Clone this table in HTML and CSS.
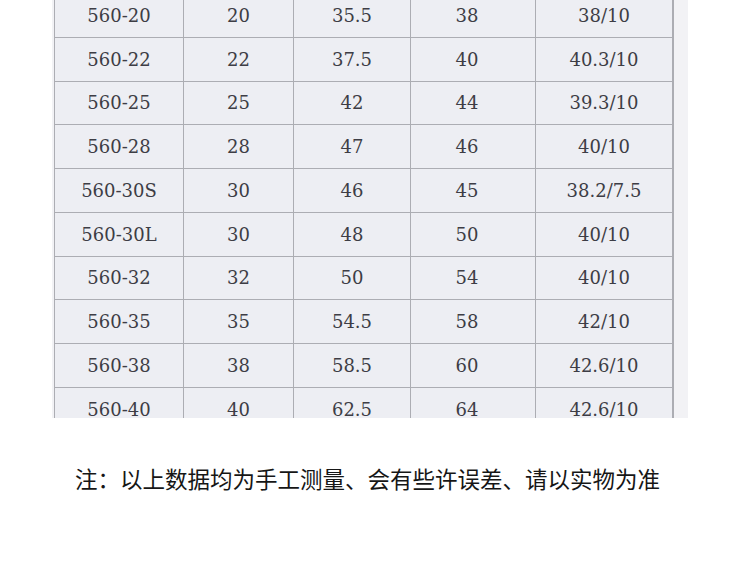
FILE: index.html
```html
<!DOCTYPE html>
<html lang="zh">
<head>
<meta charset="utf-8">
<link rel="stylesheet" href="styles.css">
</head>
<body>
<div class="photo">
  <div class="grid">
    <div class="c">560-20</div><div class="c">20</div><div class="c">35.5</div><div class="c d">38</div><div class="c">38/10</div>
    <div class="c">560-22</div><div class="c">22</div><div class="c">37.5</div><div class="c d">40</div><div class="c">40.3/10</div>
    <div class="c">560-25</div><div class="c">25</div><div class="c">42</div><div class="c d">44</div><div class="c">39.3/10</div>
    <div class="c">560-28</div><div class="c">28</div><div class="c">47</div><div class="c d">46</div><div class="c">40/10</div>
    <div class="c">560-30S</div><div class="c">30</div><div class="c">46</div><div class="c d">45</div><div class="c">38.2/7.5</div>
    <div class="c">560-30L</div><div class="c">30</div><div class="c">48</div><div class="c d">50</div><div class="c">40/10</div>
    <div class="c">560-32</div><div class="c">32</div><div class="c">50</div><div class="c d">54</div><div class="c">40/10</div>
    <div class="c">560-35</div><div class="c">35</div><div class="c">54.5</div><div class="c d">58</div><div class="c">42/10</div>
    <div class="c">560-38</div><div class="c">38</div><div class="c">58.5</div><div class="c d">60</div><div class="c">42.6/10</div>
    <div class="c">560-40</div><div class="c">40</div><div class="c">62.5</div><div class="c d">64</div><div class="c">42.6/10</div>
  </div>
</div>
<p class="note">注：以上数据均为手工测量、会有些许误差、请以实物为准</p>
</body>
</html>
```
FILE: styles.css
```css
html, body {
  margin: 0;
  padding: 0;
  background: #ffffff;
}
.photo {
  margin-left: 52px;
  width: 636px;
  height: 418px;
  overflow: hidden;
  background: #f2f2f5;
}
.grid {
  margin-left: 2px;
  margin-top: -7px;
  width: 618px;
  display: grid;
  grid-template-columns: 128px 109px 116px 124px 136px;
  grid-auto-rows: 42.75px;
  gap: 1px;
  padding: 1px;
  background: #acadb3;
}
.c {
  background: #edeef3;
  display: flex;
  align-items: center;
  justify-content: center;
  font-family: "DejaVu Serif", "Liberation Serif", serif;
  font-size: 18px;
  color: #3d3d45;
}
.d {
  padding-right: 12px;
}
.note {
  margin: 44px 0 0 0;
  padding-left: 75px;
  font-family: "Noto Sans CJK SC", "Noto Sans", sans-serif;
  font-size: 22.5px;
  line-height: 32px;
  color: #161616;
  white-space: nowrap;
}
```
